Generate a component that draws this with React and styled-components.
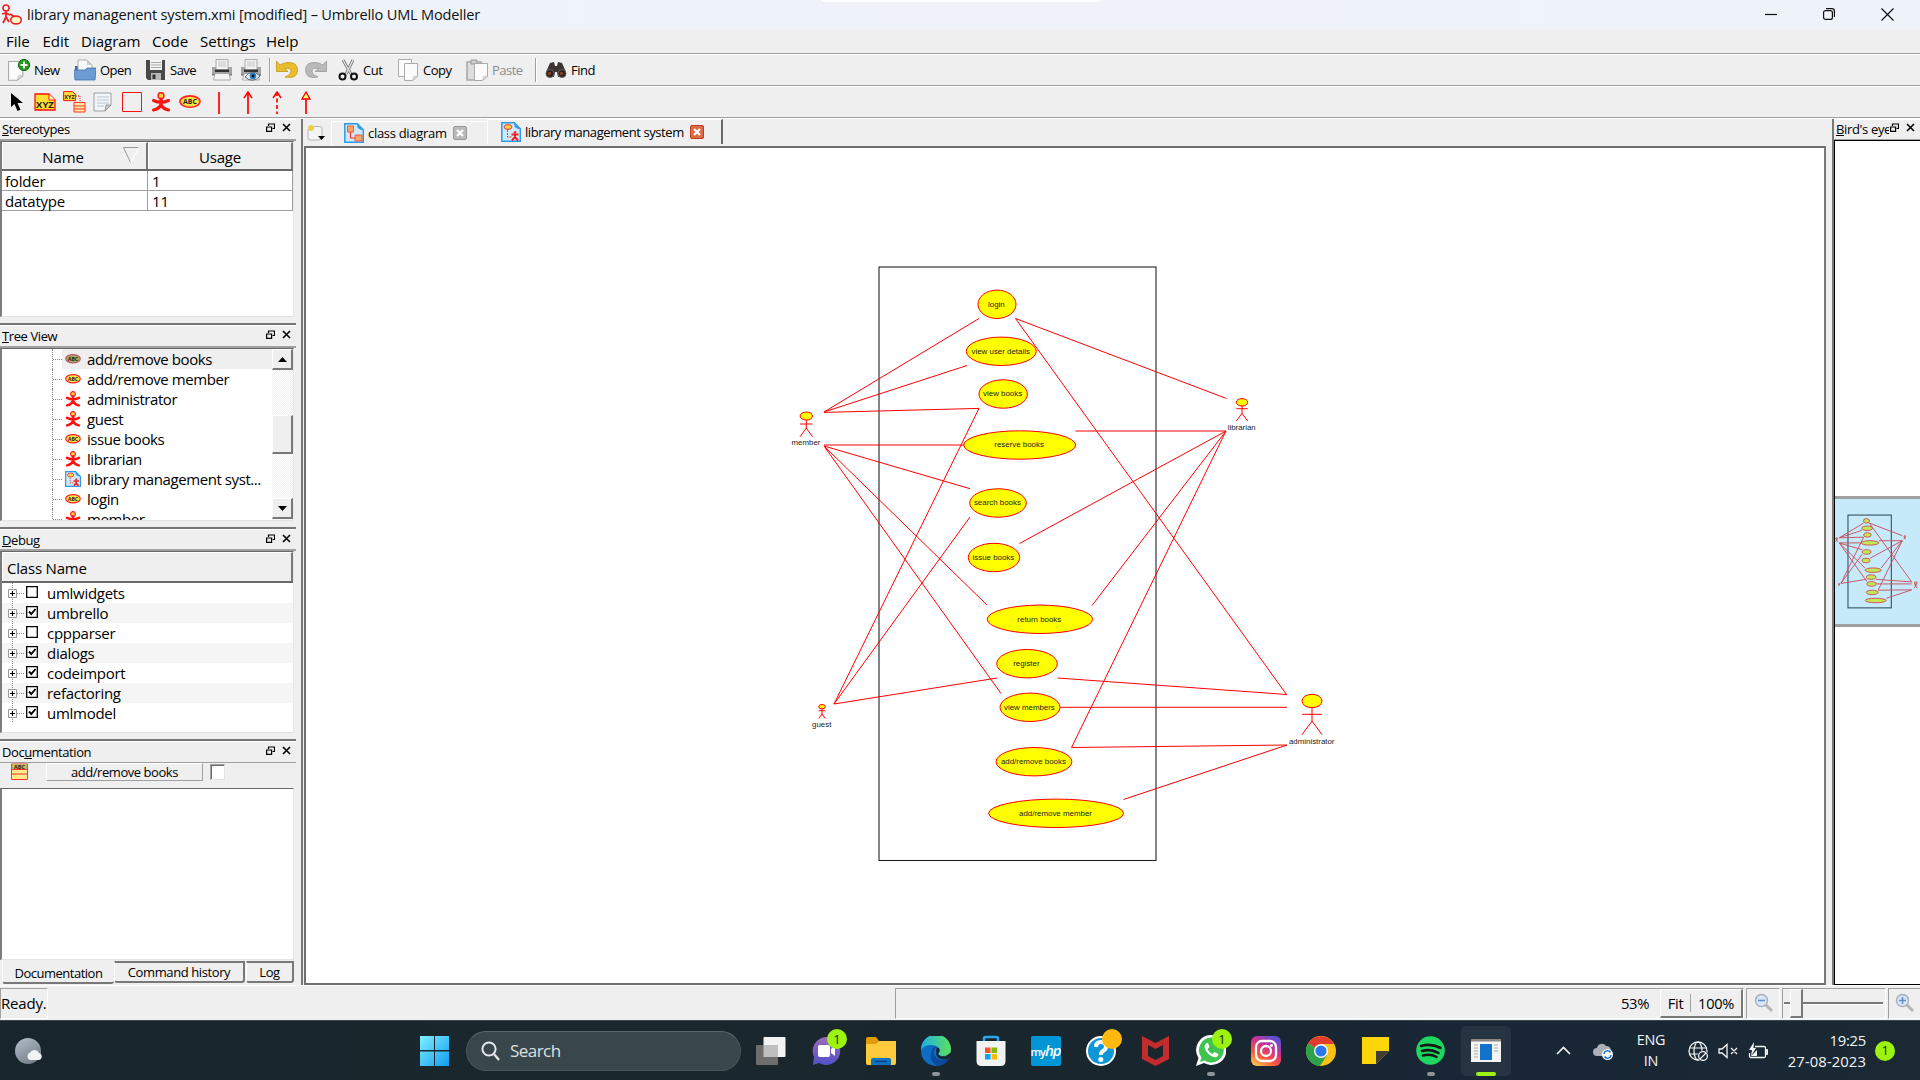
import React from "react";
import styled, { createGlobalStyle, css } from "styled-components";

const Global = createGlobalStyle`
  * { box-sizing: border-box; }
  html, body { margin: 0; padding: 0; }
  body { width: 1920px; height: 1080px; overflow: hidden; background: #efefef; color: #000;
    font-family: "Open Sans", "Noto Sans", sans-serif; }
  svg { display: block; flex: none; }
`;

const ui = css`font-size: 15px; letter-spacing: -0.2px;`;
const small = css`font-size: 13px; letter-spacing: -0.5px;`;

const Screen = styled.div`width: 1920px; height: 1080px; display: flex; flex-direction: column; overflow: hidden; white-space: nowrap;`;

/* ---------- window chrome ---------- */
const TitleBar = styled.header`
  height: 29px; flex: none; display: flex; align-items: center; padding-left: 1px;
  background: linear-gradient(90deg, #eef4fa, #eff2f9 60%, #eef3fa);
`;
const TitleText = styled.div`margin-left: 4px; width: 794px; font-size: 14.6px; letter-spacing: -0.2px; line-height: 28px; height: 29px; color: #111;`;
const TopSliver = styled.div`width: 280px; height: 2px; align-self: flex-start; background: #fdfeff; border-radius: 0 0 3px 3px;`;
const WindowButtons = styled.div`margin-left: auto; display: flex; svg { margin-right: 46px; } svg:last-child { margin-right: 26px; }`;
const MenuBar = styled.nav`
  height: 25px; flex: none; display: flex; padding-left: 6px; border-bottom: 1px solid #a0a0a0; ${ui}
`;
const MenuItem = styled.span`width: ${p => p.$w}px; line-height: 25px; font-size: 15.1px; letter-spacing: -0.05px;`;
const ToolBar = styled.div`
  height: ${p => p.$h}px; flex: none; display: flex; align-items: center; padding-left: ${p => p.$pl}px;
  border-top: 1px solid #fff; border-bottom: 1px solid #a0a0a0;
`;
const Tool = styled.div`display: flex; align-items: center; width: ${p => p.$w}px; ${small} color: ${p => (p.$off ? "#8c8c8c" : "#000")};`;
const ToolLabel = styled.span`margin-left: 4px; line-height: 18px;`;
const ToolSep = styled.div`width: 2px; height: 24px; background: #a0a0a0; border-right: 1px solid #fff; margin-right: ${p => p.$mr}px;`;

/* ---------- workspace ---------- */
const Workspace = styled.div`height: 867px; flex: none; display: flex; border-top: 1px solid #fff;`;
const LeftDock = styled.aside`width: 296px; flex: none; display: flex; flex-direction: column;`;
const Panel = styled.section`height: ${p => p.$h}px; flex: none; display: flex; flex-direction: column; ${p => p.$sep && css`border-top: 2px solid #767676;`}`;
const DockTitle = styled.div`
  height: ${p => p.$h}px; flex: none; display: flex; align-items: center; padding: ${p => p.$pt || 0}px 5px 0 2px;
  border-top: 1px solid #fff; border-bottom: ${p => p.$b ?? 2}px solid #a0a0a0; ${small}
  letter-spacing: ${p => p.$ls ?? -0.4}px;
  u { text-underline-offset: 1px; }
`;
const DockName = styled.span`flex: 1; overflow: hidden; line-height: 18px; padding-bottom: 1px;`;
const DockButtons = styled.div`display: flex; gap: 7px; padding: 0 0 4px 1px;`;
const Sunken = styled.div`
  height: ${p => p.$h}px; flex: none; width: 294px; overflow: hidden; background: #fff; display: flex; flex-direction: column;
  border: 1px solid #696969; border-left: 2px solid #7c7c7c; border-bottom-color: #e3e3e3; border-right-color: #e8e8e8;
`;
const HeaderRow = styled.div`height: ${p => p.$h}px; flex: none; display: flex; background: #efefef; border-bottom: 2px solid #696969; ${ui}`;
const HeaderCell = styled.div`
  width: ${p => p.$w}px; display: flex; align-items: center; justify-content: ${p => (p.$left ? "flex-start" : "center")};
  padding-left: ${p => p.$left || 0}px; padding-top: 2px;
  border-top: 1px solid #fff; border-left: 1px solid #fff; border-right: 2px solid #787878;
  svg { margin-bottom: 4px; }
`;
const HeaderText = styled.span`margin: 0 39px 0 32px; letter-spacing: -0.1px;`;
const TableRow = styled.div`height: 20px; display: flex; ${ui} line-height: 20px;`;
const Cell = styled.div`width: ${p => p.$w}px; padding-left: ${p => p.$pl}px; border-right: 1px solid #a0a0a0; border-bottom: 1px solid #a0a0a0;`;

const TreeBody = styled.div`flex: 1; display: flex; overflow: hidden;`;
const TreeList = styled.div`width: 270px; padding-left: 50px;`;
const TreeRow = styled.div`height: 20px; display: flex; align-items: center; ${ui} letter-spacing: -0.42px; border-left: 1px dotted #888;`;
const Branch = styled.div`width: 9px; border-top: 1px dotted #888;`;
const TreeItem = styled.div`flex: 1; height: 20px; display: flex; align-items: center; padding-left: 3px; background: ${p => (p.$hot ? "#efefef" : "none")}; span { margin-left: 6px; line-height: 20px; }`;
const Scroll = styled.div`
  width: 21px; display: flex; flex-direction: column; background: repeating-conic-gradient(#fff 0 25%, #f0f0f0 0 50%) 0 0 / 2px 2px;
`;
const raised = css`background: #efefef; border: 1px solid #fff; border-right: 2px solid #787878; border-bottom: 2px solid #787878;`;
const ScrollBtn = styled.div`height: ${p => p.$h}px; flex: none; margin-top: ${p => p.$mt || 0}px; display: flex; align-items: center; justify-content: center; ${raised}`;

const CheckRow = styled.div`height: 20px; flex: none; display: flex; align-items: center; padding-left: 6px; background: ${p => (p.$alt ? "#f5f5f5" : "#fff")}; ${ui} letter-spacing: -0.28px;`;
const CheckBoxSlot = styled.div`margin-left: 1px; padding-bottom: 2px;`;
const CheckLabel = styled.span`margin-left: 9px; line-height: 20px;`;

const DocRow = styled.div`height: 25px; flex: none; display: flex; padding: 0 0 0 11px; align-items: flex-start;`;
const DocButton = styled.div`width: 157px; height: 18px; margin: 0 7px 0 18px; text-align: center; line-height: 16px; font-size: 13px; letter-spacing: -0.45px; border: 1px solid #fff; border-right-color: #a0a0a0; border-bottom-color: #a0a0a0;`;
const DocCheck = styled.div`width: 15px; height: 16px; margin-top: 1px; background: #fff; border: 1px solid #a0a0a0; border-right-color: #e3e3e3; border-bottom-color: #e3e3e3; box-shadow: inset 1px 1px #696969;`;
const BottomTabs = styled.div`display: flex; padding-left: 2px; height: 25px; align-items: flex-start; ${small}`;
const BottomTab = styled.div`
  width: ${p => p.$w}px; height: ${p => (p.$on ? 24 : 22)}px; margin: ${p => (p.$on ? 0 : 1)}px ${p => p.$mr || 0}px 0 0; text-align: center;
  line-height: ${p => (p.$on ? 26 : 19)}px; border-bottom: 2px solid #787878; border-right: ${p => (p.$on ? 0 : 2)}px solid #787878;
  border-top: ${p => (p.$on ? 0 : 2)}px solid #787878; border-left: 1px solid #fff; border-radius: 0 0 3px 3px; letter-spacing: ${p => (p.$on ? -0.5 : -0.4)}px;
`;

const Splitter = styled.div`width: ${p => p.$w}px; flex: none; border-right: 2px solid #787878;`;
const Center = styled.main`width: 1523px; flex: none; display: flex; flex-direction: column;`;
const TabBar = styled.div`height: 27px; flex: none; display: flex; align-items: center; padding-left: 4px; ${small}`;
const TabCorner = styled.div`width: 24px;`;
const DocTab = styled.div`
  width: ${p => p.$w}px; height: 25px; align-self: flex-end; display: flex; align-items: center;
  padding: 0 0 2px 12px; border-top: 1px solid #fff; border-left: 1px solid #fff;
  ${p => p.$on && css`border-right: 2px solid #696969; padding: 0 0 1px 13px; align-self: flex-start;`}
  span { line-height: 18px; margin: 0 6px 0 4px; width: ${p => p.$tw}px; letter-spacing: ${p => p.$ls}px; }
`;
const Canvas = styled.div`flex: 1; margin-left: 1px; background: #fff; border: 2px solid #6f6f6f; border-right: 2px solid #787878;`;
const RightDock = styled.aside`width: 86px; flex: none; display: flex; flex-direction: column;`;
const BirdView = styled.div`flex: 1; background: #fff; border: 1px solid #000; border-right: 0; padding-top: 355px;`;
const BirdLens = styled.div`height: 131px; background: #c7eafa; border-top: 3px solid #a0a0a0; border-bottom: 3px solid #a0a0a0;`;

/* ---------- status bar ---------- */
const Status = styled.footer`height: 35px; flex: none; display: flex; align-items: center; border-top: 1px solid #fff; ${ui}`;
const Well = styled.div`
  height: 31px; width: ${p => p.$w}px; flex: none; margin-right: ${p => p.$mr || 0}px; display: flex; align-items: center; justify-content: ${p => p.$jc || "center"};
  border: 1px solid #a0a0a0; border-right-color: #fff; border-bottom-color: #fff; line-height: 20px; padding-left: ${p => p.$pl || 0}px;
`;
const ZoomText = styled.span`margin-right: 11px; font-size: 14.8px; letter-spacing: -0.4px;`;
const ZoomGroup = styled.div`height: 29px; width: 83px; display: flex; align-items: center; justify-content: space-evenly; font-size: 14.6px; letter-spacing: -0.25px; ${raised}`;
const Divider = styled.div`width: 1px; height: 18px; background: #a0a0a0;`;
const Track = styled.div`width: 100%; display: flex; align-items: center;`;
const Groove = styled.div`height: 3px; width: ${p => p.$w}px; background: #787878; border-bottom: 1px solid #fff;`;
const Thumb = styled.div`width: 13px; height: 29px; ${raised}`;

/* ---------- taskbar ---------- */
const Taskbar = styled.div`
  height: 60px; flex: none; display: flex; align-items: center; color: #f3f5f6; border-top: 1px solid #3c474d;
  background: linear-gradient(90deg, #18252c 0, #1a272d 30%, #19262d 60%, #182636 76%, #1a2933 100%);
`;
const Weather = styled.div`width: 419px; padding-left: 14px;`;
const SearchBox = styled.div`
  width: 275px; height: 40px; margin-left: 17px; margin-right: 2px; border-radius: 20px; display: flex; align-items: center; padding-left: 14px;
  background: #39464c; border: 1px solid #49555b; border-top-color: #5d686d; font-size: 17px; letter-spacing: -0.55px; color: #dbe0e2;
  span { margin-left: 9px; }
`;
const Slot = styled.div`
  position: relative; width: ${p => (p.$on ? 50 : 55)}px; height: 50px; margin: 0 ${p => (p.$on ? 2.5 : 0)}px; display: flex; align-items: center; justify-content: center;
  border-radius: 5px; background: ${p => (p.$on ? "#263441" : "none")};
`;
const Badge = styled.div`
  position: absolute; left: 29px; top: 3px; width: 20px; height: 20px; border-radius: 50%; background: ${p => p.$c};
  color: #1b2a10; font-size: 13px; line-height: 20px; text-align: center;
`;
const Mark = styled.div`position: absolute; bottom: 0; width: ${p => p.$w}px; height: 4px; border-radius: 2px; background: ${p => p.$c};`;
const Tray = styled.div`margin-left: auto; display: flex; align-items: center; font-size: 14.4px; letter-spacing: -0.3px;`;
const Lang = styled.div`width: 50px; text-align: center; line-height: 20.5px; margin: 0 12px 0 13px;`;
const Clock = styled.div`width: 98px; text-align: right; line-height: 20.5px; margin-right: 9px; font-size: 14.8px; letter-spacing: -0.25px;`;
const DateText = styled.span`letter-spacing: 0.1px;`;
const Notice = styled.div`width: 20px; height: 20px; border-radius: 50%; background: #9cf30f; color: #1b2a10; text-align: center; line-height: 19px; font-size: 13px; margin-right: 25px;`;
const MyHp = styled.div`width: 30px; height: 30px; border-radius: 2px; background: #0096d6; color: #fff; font-size: 11px; line-height: 29px; letter-spacing: -1px; text-align: center; font-weight: 600; i { font-size: 15px; }`;

/* ---------- icons ---------- */
const Svg = ({ w = 20, h = w, vb, children, ...r }) => (
  <svg width={w} height={h} viewBox={vb || `0 0 ${w} ${h}`} fill="none" {...r}>{children}</svg>
);
const AppIcon = () => (
  <Svg w={22} h={22}><circle cx="5" cy="4" r="3" fill="#fff" stroke="#e22" strokeWidth="1.6" /><path d="M5 7v6M1 10l4-1 4 2M5 13l-3 6M5 13l3 5M9 10l5 3" stroke="#e22" strokeWidth="1.8" /><ellipse cx="15" cy="16" rx="5.3" ry="3.9" fill="#ffffc8" stroke="#e22" strokeWidth="1.6" /></Svg>
);
const Float = () => (
  <Svg w={9} h={9}><path d="M2.5 3V1h6v4.5H6.5M2 1h7" stroke="#000" strokeWidth="1.2" /><path d="M.6 8.4V4h5v4.4zM0 4h6" stroke="#000" strokeWidth="1.2" /></Svg>
);
const Close = () => <Svg w={9} h={9}><path d="M1 1l7 7M8 1L1 8" stroke="#000" strokeWidth="1.6" /></Svg>;
const SortMark = () => <Svg w={16} h={16}><path d="M15.500.500H.500l7 15" stroke="#999" /><path d="M15.500 1L8 15.500" stroke="#fff" strokeWidth="1.300" /></Svg>;
const Page = ({ x = 0, y = 0 }) => (
  <g transform={`translate(${x} ${y})`}><path d="M.5.5h13v13l-5 4h-8z" fill="#fbfbfb" stroke="#aaa" /><path d="M13.500 13l-4 .5-1 4z" fill="#ddd" stroke="#bbb" strokeWidth=".6" /></g>
);
const NewIcon = () => <Svg w={22} h={22}><g transform="translate(0 2) scale(1.1)"><Page /></g><circle cx="16" cy="6" r="5.6" fill="#1f9b1f" stroke="#0b7410" /><path d="M16 2.500v7M12.500 6h7" stroke="#fff" strokeWidth="2" /></Svg>;
const OpenIcon = () => (
  <Svg w={22} h={22}><path d="M1 7h8l2 2h9v11H1z" fill="#3c6aa8" /><path d="M4 1h9l5 5v8H4z" fill="#fafafa" stroke="#aaa" /><path d="M13 1l5 5h-5z" fill="#ccc" /><path d="M0 11h11l2-2h9l-1 12H1z" fill="#6d9bd4" stroke="#4372b0" strokeWidth=".8" /></Svg>
);
const SaveIcon = () => (
  <Svg w={20} h={20}><path d="M1 0h18v20H2l-2-2V0z" fill="#484848" /><path d="M4 0h12v10H4z" fill="#f2f2f2" /><path d="M5 2.500h10M5 5h10M5 7.500h10" stroke="#aaa" /><path d="M5 13h10v7H5z" fill="#b8b8b8" /><path d="M6.500 14.500h3V19h-3z" fill="#333" /></Svg>
);
const PrintIcon = ({ eye }) => (
  <Svg w={22} h={22}>
    <path d="M5 .500h12V11H5z" fill="#f2f2f2" stroke="#999" strokeWidth=".8" /><path d="M7 3h8M7 5h8M7 7h8" stroke="#bbb" strokeWidth=".8" />
    <path d="M1 8h4v3h12V8h4v8H1z" fill="#a4a4a4" /><path d="M4 10.500h14v2.500H4z" fill="#333" /><path d="M1 15h20v1.500H1z" fill="#777" />
    <path d="M4 14.500h14l1.500 6.500h-17z" fill="#f4f4f4" stroke="#999" strokeWidth=".8" />
    {eye && <><path d="M5 18q7-9 15-1-7 8-15 1z" fill="#e8f2fb" stroke="#666" /><circle cx="13" cy="17" r="3.4" fill="#2f7fc4" /><circle cx="13" cy="17" r="1.400" fill="#012" /></>}</Svg>
);
const UndoIcon = ({ gray }) => (
  <Svg w={22} h={20} vb="0 0 22 20"><g transform={gray ? "translate(22 0) scale(-1 1)" : ""}><path d="M.500 1v10.500H12L8.500 8.500q6.500-1.500 6.500 3 0 3.500-6 5.500Q21 19.500 21.500 10.500 21.500 2 12 2.500 7 2.800 4 5z" fill={gray ? "#b9b9b9" : "#eabd2c"} stroke={gray ? "#999" : "#c89411"} strokeWidth=".8" /></g></Svg>
);
const CutIcon = () => <Svg w={21} h={22}><path d="M5 1l8 14M15 1L8 15" stroke="#777" strokeWidth="2.800" /><path d="M5 1l8 14M15 1L8 15" stroke="#e8e8e8" strokeWidth="1.200" /><circle cx="4.500" cy="17.500" r="3" stroke="#111" strokeWidth="2" /><circle cx="16" cy="17.500" r="3" stroke="#111" strokeWidth="2" /></Svg>;
const CopyIcon = () => <Svg w={21} h={22}><Page /><Page x={6} y={4} /></Svg>;
const PasteIcon = () => <Svg w={22} h={22}><path d="M1 3h14v18H1z" fill="#ddd" stroke="#aaa" strokeWidth="1.600" /><path d="M5 1h6v4H5z" fill="#ccc" stroke="#999" /><Page x={8} y={4} /></Svg>;
const FindIcon = () => (
  <Svg w={22} h={18}><path d="M5 2l4-1 1 4h2l1-4 4 1 4 9-1 5h-7l-1-5h-2l-1 5H2l-1-5z" fill="#3b3431" /><circle cx="5" cy="12.500" r="4" fill="#26211f" stroke="#6d625d" /><circle cx="17" cy="12.500" r="4" fill="#26211f" stroke="#6d625d" /><circle cx="4.500" cy="12.500" r="1.800" fill="#8a3c22" /><circle cx="16.500" cy="12.500" r="1.800" fill="#8a3c22" /></Svg>
);
const PointerIcon = () => <Svg w={14} h={20}><path d="M1 1v14l3.500-3 3 7 3-1.300-3-6.700H13z" fill="#000" /></Svg>;
const Abc = ({ x, y, s, children }) => <text x={x} y={y} fontSize={s} fontWeight="700" textAnchor="middle" fill="#222" letterSpacing="0" fontFamily="Open Sans, sans-serif">{children}</text>;
const XyzIcon = () => <Svg w={22} h={18}><path d="M1 1h14l6 6v10H1z" fill="#ffdf35" stroke="#f11" strokeWidth="1.300" /><path d="M15 1v6h6" fill="#ffb" stroke="#f11" /><Abc x={11} y={14.500} s={9.500}>XYZ</Abc></Svg>;
const AnchorIcon = () => <Svg w={23} h={22}><path d="M.6.6h9l3 3v6H.6z" fill="#ffdf35" stroke="#f11" /><Abc x={6.500} y={8} s={5.500}>XYZ</Abc><path d="M13 5h4v6" stroke="#f11" strokeDasharray="1 1" /><path d="M11 11.500h11V21H11zM11 15h11M11 18h11" fill="#fe9" stroke="#f33" /></Svg>;
const NoteIcon = () => <Svg w={20} h={20}><path d="M1 1h17v12l-6 6H1z" fill="#f3f6f8" stroke="#888" strokeWidth=".8" /><path d="M4 5h12M4 8h12M4 11h12M4 14h7" stroke="#b6c3cd" /><path d="M18 13h-5l-1 6z" fill="#ccc" stroke="#888" strokeWidth=".8" /></Svg>;
const BoxIcon = () => <Svg w={20} h={20}><path d="M.5.5h19v19H.5z" stroke="#f11" /></Svg>;
const ActorIcon = ({ s = 20 }) => (
  <Svg w={s} h={s} vb="0 0 20 20"><ellipse cx="10" cy="3.700" rx="2.900" ry="3" fill="#ffd92e" stroke="#f22" strokeWidth="1.500" /><path d="M10 7v6M2.500 8.500Q10 12 17.500 8.500M10 12.500Q8 17 2.500 18M10 12.500Q12 17 17.500 18" stroke="#f11" strokeWidth="3.100" strokeLinecap="round" /></Svg>
);
const CaseIcon = ({ w = 22, hot }) => (
  <Svg w={w} h={w * 0.6} vb="0 0 22 13"><ellipse cx="11" cy="6.500" rx="10" ry="5.700" fill={hot ? "#a8a85c" : "#ffe14a"} stroke={hot ? "#b85a6a" : "#f22"} strokeWidth="1.600" /><Abc x={11} y={9.200} s={7}>ABC</Abc></Svg>
);
const LineIcon = ({ kind }) => (
  <Svg w={10} h={23}><path d={kind === "tri" ? "M5 8v15" : "M5 1v22"} stroke="#f00" strokeWidth="1.700" strokeDasharray={kind === "dash" ? "4 2.500" : undefined} />
    {(kind === "arrow" || kind === "dash") && <path d="M1 7l4-6 4 6" stroke="#f00" strokeWidth="1.500" />}{kind === "tri" && <path d="M1 8l4-7 4 7z" fill="#ff6" stroke="#f00" strokeWidth="1.300" />}</Svg>
);
const DiagramIcon = ({ s = 20, cls }) => (
  <Svg w={s} h={s} vb="0 0 20 20"><path d="M.8.800h12.500l6 6v12.500H.8z" fill="#cfe9fb" stroke="#2b9be8" strokeWidth="1.500" /><path d="M13 1q0 6 6 6z" fill="#2b9be8" />
    {cls ? <><path d="M3.500 3h6v6h-6zM11 12h7v6h-7z" fill="#f9a56c" stroke="#e8603a" /><path d="M6.500 9v6H11" stroke="#e33" strokeWidth="1.200" /></>
      : <><ellipse cx="7" cy="5" rx="4" ry="2.400" fill="#f4d04e" stroke="#e33" /><path d="M6.500 8v7H11" stroke="#e33" strokeDasharray="2 1" /><circle cx="14" cy="10.500" r="1.400" fill="#e33" /><path d="M10.500 12.500h7M14 12v3l-3 3.500M14 15l3 3.500" stroke="#e22" strokeWidth="2" /></>}</Svg>
);
const TabClose = ({ on }) => <Svg w={14} h={14}><rect x=".5" y=".5" width="13" height="13" rx="1.500" fill={on ? "#e0694a" : "#b9b9b9"} stroke={on ? "#c33c1d" : "#9a9a9a"} /><path d="M4 4l6 6M10 4l-6 6" stroke="#fff" strokeWidth="2.200" /></Svg>;
const NewTab = () => <Svg w={19} h={18}><path d="M3 2.500h10q2 0 2 2V14l-3 2H3q-2 0-2-2V5" fill="#f4f4f4" stroke="#b4b4b4" /><circle cx="4" cy="4" r="3" fill="#f3cf48" /><path d="M11 12h7l-3.500 4z" fill="#000" /></Svg>;
const Magnifier = ({ plus }) => <Svg w={20} h={20}><path d="M11 11l7 7" stroke="#b5b5b5" strokeWidth="3" /><circle cx="7.500" cy="7.500" r="6" fill="#d9e6f5" stroke="#a7b1bd" strokeWidth="1.500" /><path d={plus ? "M4 7.500h7M7.500 4v7" : "M4 7.500h7"} stroke="#5f8fc9" strokeWidth="1.600" /></Svg>;
const Expander = () => <Svg w={17} h={20}><path d="M4.500 0v20M9 10.500h7" stroke="#888" strokeDasharray="1 1" /><path d="M.5 6.500h8v8h-8z" fill="#fff" stroke="#999" /><path d="M2 10.500h5M4.500 8v5" stroke="#000" strokeWidth="1.200" /></Svg>;
const Check = ({ on }) => <Svg w={12} h={14}><path d="M.7 1.700h10.600v10.600H.7z" fill="#fff" stroke="#000" strokeWidth="1.300" />{on ? <path d="M3 6.500l2.300 2.500L9.500 4" stroke="#000" strokeWidth="1.900" /> : null}</Svg>;
const ClassIcon = () => <Svg w={17} h={17}><path d="M.5 1h16v15.500H.5z" fill="#ffe98a" stroke="#f33" /><path d="M1 1h15v5H1z" fill="#c9b85a" /><path d="M.5 6.500h16M.5 11h16" stroke="#f33" /><Abc x={8.500} y={5.800} s={5.500}>ABC</Abc></Svg>;

/* ---------- use case diagram ---------- */
const cases = [
  ["login", 997, 304.3, 19], ["view user details", 1001.3, 351.3, 35], ["view books", 1003.2, 394, 24.2], ["reserve books", 1019.7, 445, 56],
  ["search books", 998, 503, 28.3], ["issue books", 994, 557.5, 25.7], ["return books", 1039.9, 619.3, 52.7], ["register", 1027, 663.7, 30.3],
  ["view members", 1030, 707.3, 30], ["add/remove books", 1034, 761.7, 37.9], ["add/remove member", 1056.1, 813.3, 67.5],
];
const links = [
  [824, 412, 979, 318.5], [824, 412, 967, 365.5], [824, 412.4, 979, 408.4], [979, 408.4, 834, 704], [824, 445, 964, 445],
  [824, 446, 970, 488.7], [824, 446, 987, 605], [824, 446, 1001, 693.5], [1015.5, 318.5, 1226.5, 398.5], [1015.5, 318.5, 1286.5, 694.5],
  [1075.5, 431, 1226, 431], [1226, 431, 1019.5, 543.5], [1226, 431, 1092, 605.5], [1226, 431, 1071.5, 747.5], [970, 517, 834, 704],
  [834, 704, 997, 678], [1057.5, 678, 1287, 694.5], [1060, 707.3, 1287, 707.3], [1071.5, 747.5, 1287, 745], [1123.5, 799.5, 1287, 745],
];
const actors = [
  ["member", 806.3, 416, 6.2, 4, 424, 428, 436.7, 444.5], ["librarian", 1242, 402.3, 5.7, 3.7, 408.7, 413.3, 421, 430],
  ["guest", 822, 706.7, 3.3, 2.2, 710.7, 714, 718.5, 727], ["administrator", 1312, 701, 10, 6.7, 714.3, 721, 734.7, 743.8],
];
const Model = ({ line = "#f00", fill = "#ff0", frame = "#222", sw = 1, labels }) => (
  <g fontFamily="Liberation Sans, Arial, sans-serif" fontSize="7.9" textAnchor="middle">
    <rect x="879" y="267" width="277" height="593.5" stroke={frame} strokeWidth={sw * 1.1} />
    {links.map((l, i) => <line key={i} x1={l[0]} y1={l[1]} x2={l[2]} y2={l[3]} stroke={line} strokeWidth={sw} />)}
    {cases.map(([t, x, y, r]) => (
      <g key={t}><ellipse cx={x} cy={y} rx={r} ry="14.2" fill={fill} stroke={line} strokeWidth={sw} />{labels && <text x={x - 0.6} y={y + 2.4} fill="#222">{t}</text>}</g>
    ))}
    {actors.map(([t, x, y, rx, ry, arm, hip, foot, base]) => (
      <g key={t}><path d={`M${x} ${y + ry}V${hip}M${x - rx} ${arm}H${x + rx}M${x - rx} ${foot}L${x} ${hip}L${x + rx} ${foot}`} stroke={line} strokeWidth={sw} />
        <ellipse cx={x} cy={y} rx={rx} ry={ry} fill={fill} stroke={line} strokeWidth={sw} />{labels && <text x={x - 0.3} y={base} fill="#222">{t}</text>}</g>
    ))}
  </g>
);

const apps = [
  { id: "taskview" }, { id: "chat", badge: "1", tint: "#9cf30f" }, { id: "files" }, { id: "edge", mark: true }, { id: "store" }, { id: "myhp" },
  { id: "help", badge: " ", tint: "#ffb90f" }, { id: "mcafee" }, { id: "whatsapp", badge: "1", tint: "#9cf30f", mark: true },
  { id: "instagram" }, { id: "chrome" }, { id: "sticky" }, { id: "spotify", mark: true }, { id: "umbrello", mark: true, active: true },
];
const art = {
  taskview: <Svg w={30} h={28}><rect x="7.500" y="0" width="22" height="20" rx="1" fill="#f3f3f3" /><rect x="0" y="8" width="22" height="20" rx="1" fill="#6d6d6d" /><rect x="7.500" y="8" width="14.500" height="12" fill="#bfbfbf" /></Svg>,
  chat: <Svg w={30} h={30}><defs><linearGradient id="ch" x2="0" y2="1"><stop stopColor="#9c6bb5" /><stop offset="1" stopColor="#4f52c8" /></linearGradient></defs><path d="M15 1a14 14 0 1 1-7 26l-6 2 1-8A14 14 0 0 1 15 1z" fill="url(#ch)" /><rect x="7" y="9" width="12" height="12" rx="2" fill="#fff" /><path d="M20 13l4-3v10l-4-3z" fill="#fff" /></Svg>,
  files: <Svg w={30} h={28}><path d="M0 2q0-2 2-2h8l3 4-2 3H0z" fill="#e09b0a" /><path d="M0 7h10l3-3h17v22q0 2-2 2H2q-2 0-2-2z" fill="#fdcb3c" /><path d="M5 28v-5q0-2 2-2h16q2 0 2 2v5z" fill="#0c72c4" /><path d="M9 24.500h12" stroke="#063f73" strokeWidth="1.400" /></Svg>,
  edge: <Svg w={30} h={30}><defs><linearGradient id="eg"><stop stopColor="#1cb0e6" /><stop offset="1" stopColor="#5fe05a" /></linearGradient></defs><circle cx="15" cy="15" r="15" fill="#0d6cc4" /><path d="M0 14A15 15 0 0 1 30 13q0 7-7 7-5 0-6-2 2-2 1-5-2-4-8-4-7 0-10 5z" fill="url(#eg)" /><path d="M10 17q1-6 6-7-7 8 1 13 6 3 11-1-4 8-12 8-8-5-6-13z" fill="#0b4a98" /><path d="M16 11q5 2 1 7 2 3 7 2.500l6-4v4l-4 3q-14 1-10-12.500z" fill="#18262d" /></Svg>,
  store: <Svg w={30} h={31}><path d="M8 8V3.500Q8 2 9.500 2h11Q22 2 22 3.500V8" stroke="#2aa4ee" strokeWidth="2.600" /><path d="M.5 6h29v20q0 5-5 5h-19q-5 0-5-5z" fill="#f2f2f2" /><path d="M9 12.500h5.500V18H9z" fill="#f35325" /><path d="M15.500 12.500H21V18h-5.500z" fill="#81bc06" /><path d="M9 19h5.500v5.500H9z" fill="#05a6f0" /><path d="M15.500 19H21v5.500h-5.500z" fill="#ffba08" /></Svg>,
  myhp: <MyHp>my<i>hp</i></MyHp>,
  help: <Svg w={30} h={30}><circle cx="15" cy="15" r="14" fill="#0d96d8" stroke="#fff" strokeWidth="2" /><path d="M10 11q0-5 5-5t5 4.500q0 3-3 4.500-2 1-2 4" stroke="#fff" strokeWidth="4" /><circle cx="14.800" cy="23.500" r="2.500" fill="#fff" /></Svg>,
  mcafee: <Svg w={27} h={30}><path d="M0 0l13.500 7L27 0v23l-13.500 7L0 23zM6 9v11l7.500 4 7.500-4V9l-7.500 4z" fill="#c22c2c" fillRule="evenodd" /></Svg>,
  whatsapp: <Svg w={30} h={31}><path d="M15.500 0A15 15 0 1 1 8 28L0 31l2.500-8A15 15 0 0 1 15.500 0z" fill="#fff" /><path d="M15.500 2.500a12.500 12.500 0 1 1-7 23L4 27l1.500-4.500A12.500 12.500 0 0 1 15.500 2.500z" fill="#3fc351" /><path d="M11 8q-4 2-1.500 7t8 7q4 1 5-3l-4-2-2 2q-4-2-5-5l2-2-1.500-4z" fill="#fff" /></Svg>,
  instagram: <Svg w={30} h={30}><defs><linearGradient id="ig" x1=".1" y1="1" x2=".7" y2="0"><stop stopColor="#ffd04d" /><stop offset=".35" stopColor="#f7573b" /><stop offset=".65" stopColor="#d2308c" /><stop offset="1" stopColor="#5b4fd6" /></linearGradient></defs><rect width="30" height="30" rx="6" fill="url(#ig)" /><rect x="5" y="5" width="20" height="20" rx="6" stroke="#fff" strokeWidth="2.300" /><circle cx="15" cy="15" r="5" stroke="#fff" strokeWidth="2.300" /><circle cx="20.500" cy="9.500" r="1.400" fill="#fff" /></Svg>,
  chrome: <Svg w={30} h={30}><circle cx="15" cy="15" r="15" fill="#fbc116" /><path d="M15 15L2 7.500A15 15 0 0 1 28 8H15z" fill="#e33b2e" /><path d="M2 7.500A15 15 0 0 0 14 30l7-11-6-4z" fill="#2da24c" /><circle cx="15" cy="15" r="7" fill="#fff" /><circle cx="15" cy="15" r="5.600" fill="#2b78ee" /></Svg>,
  sticky: <Svg w={27} h={27}><path d="M0 0h27v14L14 27H0z" fill="#ffd60a" /><path d="M14 14h13L14 27z" fill="#443d33" /></Svg>,
  spotify: <Svg w={29} h={29}><circle cx="14.500" cy="14.500" r="14.300" fill="#1ed760" /><path d="M5 10q10-3 19.500 2M6 15q9-2.500 16.500 2M7 19.500q8-2 13.500 1.500" stroke="#101a14" strokeWidth="2.600" strokeLinecap="round" /></Svg>,
  umbrello: <Svg w={30} h={23}><rect width="30" height="23" fill="#f4f4f4" /><path d="M0 0h30v2.500H0z" fill="#8d8581" /><rect x="9" y="5" width="12" height="16" fill="#1272cc" /><path d="M3 6h4M3 9h4M3 12h4M3 15h4M3 18h4M23 6h4M23 9h4M23 12h4" stroke="#aaa" /></Svg>,
};

const Title = ({ h, b, ls, pt, children }) => (
  <DockTitle $h={h} $b={b} $ls={ls} $pt={pt}><DockName>{children}</DockName><DockButtons><Float /><Close /></DockButtons></DockTitle>
);

const tree = [
  ["add/remove books", "hot"], ["add/remove member", "case"], ["administrator", "actor"], ["guest", "actor"], ["issue books", "case"],
  ["librarian", "actor"], ["library management syst...", "diagram"], ["login", "case"], ["member", "actor"],
];
const debug = [["umlwidgets", 0], ["umbrello", 1], ["cppparser", 0], ["dialogs", 1], ["codeimport", 1], ["refactoring", 1], ["umlmodel", 1]];
const menus = [["File", 36.5], ["Edit", 38.5], ["Diagram", 71], ["Code", 48], ["Settings", 66], ["Help", 40]];

export default function App() {
  return (
    <Screen>
      <Global />
      <TitleBar>
        <AppIcon />
        <TitleText>library managenent system.xmi [modified] – Umbrello UML Modeller</TitleText>
        <TopSliver />
        <WindowButtons>
          <Svg w={12}><path d="M0 6.500h12" stroke="#111" strokeWidth="1.200" /></Svg>
          <Svg w={12}><rect x=".6" y="2.600" width="8.800" height="8.800" rx="2" stroke="#111" strokeWidth="1.200" /><path d="M3 .700h6q2.400 0 2.400 2.400V9" stroke="#111" strokeWidth="1.200" /></Svg>
          <Svg w={13}><path d="M.5.500l12 12M12.500.500l-12 12" stroke="#111" strokeWidth="1.200" /></Svg>
        </WindowButtons>
      </TitleBar>
      <MenuBar>{menus.map(([m, w]) => <MenuItem key={m} $w={w}>{m}</MenuItem>)}</MenuBar>
      <ToolBar $h={32} $pl={8}>
        <Tool $w={66}><NewIcon /><ToolLabel>New</ToolLabel></Tool>
        <Tool $w={72}><OpenIcon /><ToolLabel>Open</ToolLabel></Tool>
        <Tool $w={65}><SaveIcon /><ToolLabel>Save</ToolLabel></Tool>
        <Tool $w={29}><PrintIcon /></Tool>
        <Tool $w={29}><PrintIcon eye /></Tool>
        <ToolSep $mr={5} />
        <Tool $w={29}><UndoIcon /></Tool>
        <Tool $w={33}><UndoIcon gray /></Tool>
        <Tool $w={60}><CutIcon /><ToolLabel>Cut</ToolLabel></Tool>
        <Tool $w={68}><CopyIcon /><ToolLabel>Copy</ToolLabel></Tool>
        <Tool $w={69} $off><PasteIcon /><ToolLabel>Paste</ToolLabel></Tool>
        <ToolSep $mr={8} />
        <Tool $w={60}><FindIcon /><ToolLabel>Find</ToolLabel></Tool>
      </ToolBar>
      <ToolBar $h={32} $pl={10}>
        <Tool $w={24}><PointerIcon /></Tool><Tool $w={29}><XyzIcon /></Tool><Tool $w={30}><AnchorIcon /></Tool><Tool $w={29}><NoteIcon /></Tool>
        <Tool $w={29}><BoxIcon /></Tool><Tool $w={28}><ActorIcon /></Tool><Tool $w={35}><CaseIcon /></Tool>
        <Tool $w={29}><LineIcon kind="line" /></Tool><Tool $w={29}><LineIcon kind="arrow" /></Tool><Tool $w={29}><LineIcon kind="dash" /></Tool><Tool $w={29}><LineIcon kind="tri" /></Tool>
      </ToolBar>

      <Workspace>
        <LeftDock>
          <Panel $h={204}>
            <Title h={22}><u>S</u>tereotypes</Title>
            <Sunken $h={176}>
              <HeaderRow $h={29}><HeaderCell $w={146}><HeaderText>Name</HeaderText><SortMark /></HeaderCell><HeaderCell $w={145}>Usage</HeaderCell></HeaderRow>
              {[["folder", 1], ["datatype", 11]].map(([a, b]) => <TableRow key={a}><Cell $w={146} $pl={3}>{a}</Cell><Cell $w={145} $pl={4}>{b}</Cell></TableRow>)}
            </Sunken>
          </Panel>
          <Panel $h={204} $sep>
            <Title h={23}><u>T</u>ree View</Title>
            <Sunken $h={173}>
              <TreeBody>
                <TreeList>
                  {tree.map(([t, k]) => (
                    <TreeRow key={t}><Branch /><TreeItem $hot={k === "hot"}>
                      {k === "actor" ? <ActorIcon s={16} /> : k === "diagram" ? <DiagramIcon s={16} /> : <CaseIcon w={16} hot={k === "hot"} />}
                      <span>{t}</span></TreeItem></TreeRow>
                  ))}
                </TreeList>
                <Scroll>
                  <ScrollBtn $h={21}><Svg w={9} h={5}><path d="M0 5l4.500-5L9 5z" fill="#000" /></Svg></ScrollBtn>
                  <ScrollBtn $h={39} $mt={45} />
                  <ScrollBtn $h={21} $mt={44}><Svg w={9} h={5}><path d="M0 0l4.500 5L9 0z" fill="#000" /></Svg></ScrollBtn>
                </Scroll>
              </TreeBody>
            </Sunken>
          </Panel>
          <Panel $h={212} $sep>
            <Title h={22} pt={2}><u>D</u>ebug</Title>
            <Sunken $h={182}>
              <HeaderRow $h={31}><HeaderCell $w={291} $left={4}>Class Name</HeaderCell></HeaderRow>
              {debug.map(([t, on], i) => <CheckRow key={t} $alt={i % 2 === 1}><Expander /><CheckBoxSlot><Check on={on} /></CheckBoxSlot><CheckLabel>{t}</CheckLabel></CheckRow>)}
            </Sunken>
          </Panel>
          <Panel $h={221} $sep>
            <Title h={22} b={1}>Doc<u>u</u>mentation</Title>
            <DocRow><ClassIcon /><DocButton>add/remove books</DocButton><DocCheck /></DocRow>
            <Sunken $h={172} />
          </Panel>
          <BottomTabs>
            <BottomTab $on $w={112}>Documentation</BottomTab><BottomTab $w={131} $mr={1}>Command history</BottomTab><BottomTab $w={48}>Log</BottomTab>
          </BottomTabs>
        </LeftDock>
        <Splitter $w={7} />
        <Center>
          <TabBar>
            <TabCorner><NewTab /></TabCorner>
            <DocTab $w={156} $tw={79} $ls={-0.3}><DiagramIcon cls /><span>class diagram</span><TabClose /></DocTab>
            <DocTab $w={236} $on $tw={159} $ls={-0.42}><DiagramIcon /><span>library management system</span><TabClose on /></DocTab>
          </TabBar>
          <Canvas><Svg w={1516} h={830} vb="306 148 1516 830"><Model labels /></Svg></Canvas>
        </Center>
        <Splitter $w={8} />
        <RightDock>
          <Title h={21} b={1} ls={-0.35}><u>B</u>ird's eye</Title>
          <BirdView>
            <BirdLens><Svg w={85} h={125} vb="1835 499 85 125"><g transform="translate(1710.5 473.3) scale(.1564)"><Model line="#c8505e" fill="#c4e850" frame="#28485c" sw={6} /></g></Svg></BirdLens>
          </BirdView>
        </RightDock>
      </Workspace>

      <Status>
        <Well $w={48} $mr={847} $jc="flex-start">Ready.</Well>
        <Well $w={849} $mr={2} $jc="flex-end"><ZoomText>53%</ZoomText><ZoomGroup><span>Fit</span><Divider /><span>100%</span></ZoomGroup></Well>
        <Well $w={34} $mr={2} $pl={1}><Magnifier /></Well>
        <Well $w={104} $mr={2} $jc="flex-start" $pl={1}><Track><Groove $w={6} /><Thumb /><Groove $w={80} /></Track></Well>
        <Well $w={34}><Magnifier plus /></Well>
      </Status>

      <Taskbar>
        <Weather><Svg w={30} h={28}><defs><linearGradient id="mn" x2=".6" y2="1"><stop stopColor="#b4bfca" /><stop offset="1" stopColor="#76818c" /></linearGradient></defs><circle cx="14" cy="14" r="13" fill="url(#mn)" /><path d="M16 23a4 4 0 0 1 0-7.500 5 5 0 0 1 9 .500 3.600 3.600 0 0 1 0 7z" fill="#f0f3f6" /></Svg></Weather>
        <Svg w={30} h={30}><defs><linearGradient id="wn" x2="1" y2="1"><stop stopColor="#7ff0ff" /><stop offset="1" stopColor="#109cf2" /></linearGradient></defs><path d="M1 0h14v14H1zM16 0h14v14H16zM1 15.500h14V30H1zM16 15.500h14V30H16z" fill="url(#wn)" /></Svg>
        <SearchBox><Svg w={20} h={20}><circle cx="8" cy="8" r="6.600" stroke="#e4e8ea" strokeWidth="2" /><path d="M13 13l5 6" stroke="#e4e8ea" strokeWidth="2.200" /></Svg><span>Search</span></SearchBox>
        {apps.map(a => (
          <Slot key={a.id} $on={a.active}>{art[a.id]}
            {a.badge ? <Badge $c={a.tint}>{a.badge}</Badge> : null}
            {a.mark ? <Mark $w={a.active ? 20 : 8} $c={a.active ? "#9cf30f" : "#8d9498"} /> : null}
          </Slot>
        ))}
        <Tray>
          <Svg w={37} h={20}><path d="M1 13l6.500-6.500L14 13" stroke="#f3f5f6" strokeWidth="1.700" /></Svg>
          <Svg w={20} h={20}><path d="M4 15a4 4 0 0 1 0-8 5 5 0 0 1 9-2 5 5 0 0 1 5 4v6z" fill="#aab0b5" /><circle cx="14.500" cy="13.500" r="5.500" fill="#fff" /><path d="M11 13a3.500 3.500 0 0 1 6.500-1.500M18 14a3.500 3.500 0 0 1-6.500 1.500" stroke="#1477cf" strokeWidth="1.500" /></Svg>
          <Lang>ENG<br />IN</Lang>
          <Svg w={30} h={20}><circle cx="10" cy="10" r="9" stroke="#f3f5f6" strokeWidth="1.300" /><ellipse cx="10" cy="10" rx="4" ry="9" stroke="#f3f5f6" strokeWidth="1.200" /><path d="M1.500 7h17M1.500 13h17" stroke="#f3f5f6" strokeWidth="1.200" /><circle cx="15" cy="15" r="5.500" fill="#1a2833" /><circle cx="15" cy="15" r="4.400" stroke="#f3f5f6" strokeWidth="1.300" /><path d="M12 18l6-6" stroke="#f3f5f6" strokeWidth="1.300" /></Svg>
          <Svg w={30} h={20}><path d="M1 8h3l5-4.500v13L4 12H1zM13 7l6 6M19 7l-6 6" stroke="#f3f5f6" strokeWidth="1.300" /></Svg>
          <Svg w={20} h={18}><path d="M7 4.500h9q1.500 0 1.500 1.500v8q0 1.500-1.500 1.500H3q-1.500 0-1.500-1.500v-3M18 8v4h1.500V8z" stroke="#f3f5f6" strokeWidth="1.300" /><path d="M6 0L1 8h3l-1 6 5-8H5.500zM3 14h6V8z" fill="#f3f5f6" /></Svg>
          <Clock>19:25<br /><DateText>27-08-2023</DateText></Clock>
          <Notice>1</Notice>
        </Tray>
      </Taskbar>
    </Screen>
  );
}
